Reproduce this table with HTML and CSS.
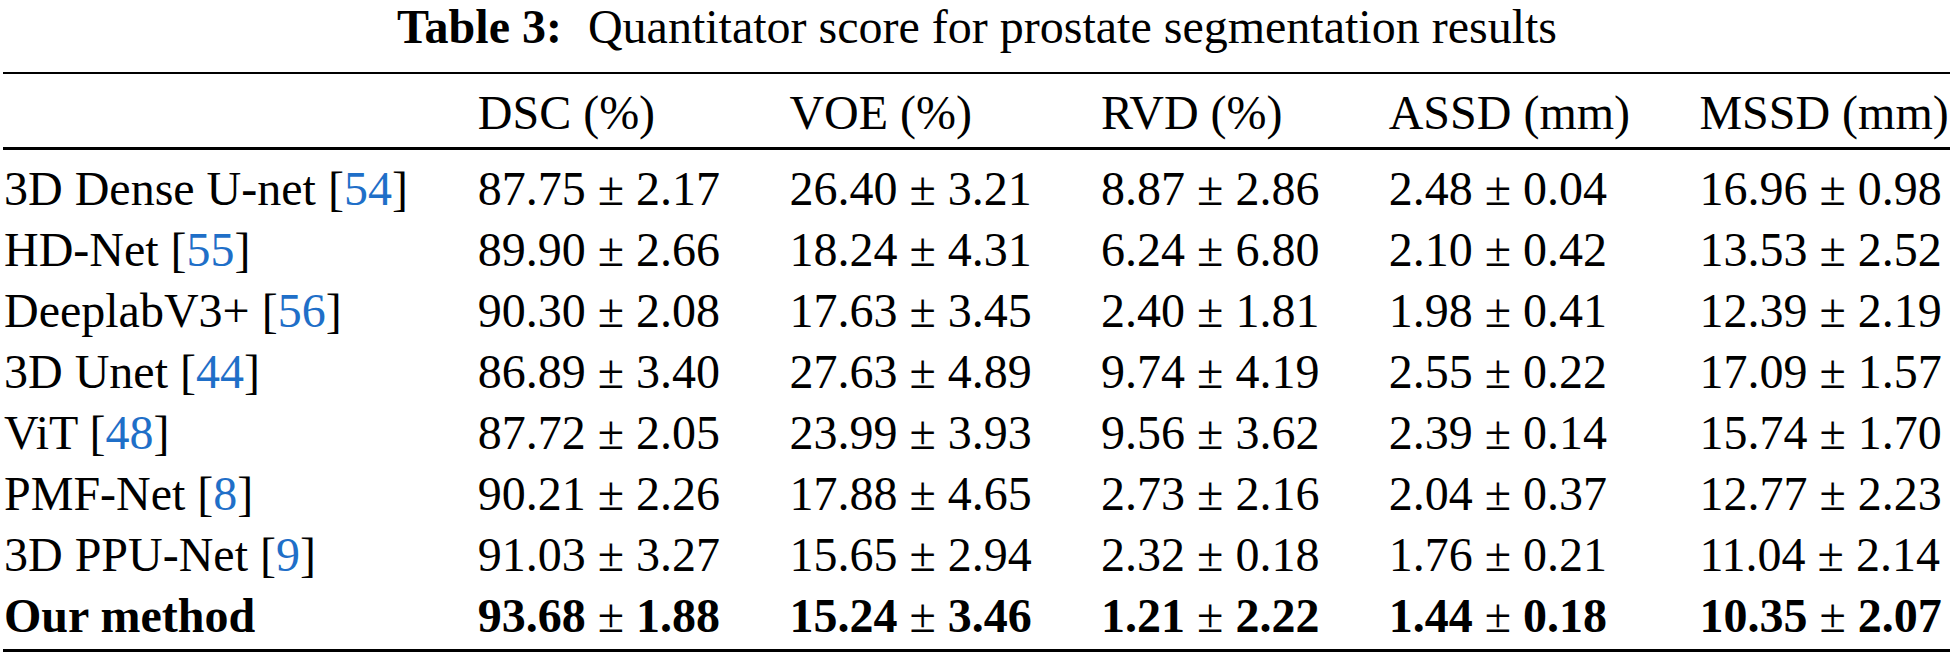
FILE: index.html
```html
<!DOCTYPE html>
<html lang="en">
<head>
<meta charset="utf-8">
<title>Table 3</title>
<link rel="stylesheet" href="styles.css">
</head>
<body>
<div class="page">
  <div class="caption"><span class="cap-label">Table 3:</span><span class="cap-text">Quantitator score for prostate segmentation results</span></div>
  <table class="results">
    <thead>
      <tr>
        <th></th>
        <th>DSC (%)</th>
        <th>VOE (%)</th>
        <th>RVD (%)</th>
        <th>ASSD (mm)</th>
        <th>MSSD (mm)</th>
      </tr>
    </thead>
    <tbody>
      <tr>
        <td>3D Dense U-net [<a class="ref">54</a>]</td>
        <td>87.75 ± 2.17</td><td>26.40 ± 3.21</td><td>8.87 ± 2.86</td><td>2.48 ± 0.04</td><td>16.96 ± 0.98</td>
      </tr>
      <tr>
        <td>HD-Net [<a class="ref">55</a>]</td>
        <td>89.90 ± 2.66</td><td>18.24 ± 4.31</td><td>6.24 ± 6.80</td><td>2.10 ± 0.42</td><td>13.53 ± 2.52</td>
      </tr>
      <tr>
        <td>DeeplabV3+ [<a class="ref">56</a>]</td>
        <td>90.30 ± 2.08</td><td>17.63 ± 3.45</td><td>2.40 ± 1.81</td><td>1.98 ± 0.41</td><td>12.39 ± 2.19</td>
      </tr>
      <tr>
        <td>3D Unet [<a class="ref">44</a>]</td>
        <td>86.89 ± 3.40</td><td>27.63 ± 4.89</td><td>9.74 ± 4.19</td><td>2.55 ± 0.22</td><td>17.09 ± 1.57</td>
      </tr>
      <tr>
        <td>ViT [<a class="ref">48</a>]</td>
        <td>87.72 ± 2.05</td><td>23.99 ± 3.93</td><td>9.56 ± 3.62</td><td>2.39 ± 0.14</td><td>15.74 ± 1.70</td>
      </tr>
      <tr>
        <td>PMF-Net [<a class="ref">8</a>]</td>
        <td>90.21 ± 2.26</td><td>17.88 ± 4.65</td><td>2.73 ± 2.16</td><td>2.04 ± 0.37</td><td>12.77 ± 2.23</td>
      </tr>
      <tr>
        <td>3D PPU-Net [<a class="ref">9</a>]</td>
        <td>91.03 ± 3.27</td><td>15.65 ± 2.94</td><td>2.32 ± 0.18</td><td>1.76 ± 0.21</td><td>11.04 ± 2.14</td>
      </tr>
      <tr class="best">
        <td>Our method</td>
        <td>93.68 <span class="pm">±</span> 1.88</td><td>15.24 <span class="pm">±</span> 3.46</td><td>1.21 <span class="pm">±</span> 2.22</td><td>1.44 <span class="pm">±</span> 0.18</td><td>10.35 <span class="pm">±</span> 2.07</td>
      </tr>
    </tbody>
  </table>
</div>
</body>
</html>
```
FILE: styles.css
```css
html, body {
  margin: 0;
  padding: 0;
  background: #ffffff;
}

body {
  font-family: "Liberation Serif", "Times New Roman", serif;
  font-size: 48px;
  color: #000000;
}

.page {
  width: 1954px;
  display: flex;
  flex-direction: column;
  align-items: stretch;
}

.caption {
  text-align: center;
  line-height: 54px;
  height: 54px;
  margin-bottom: 18px;
  white-space: nowrap;
}

.cap-label {
  font-weight: bold;
  margin-right: 26px;
}

.results {
  border-collapse: collapse;
  margin: 0 4px 0 3px;
  border-top: 2px solid #000;
  border-bottom: 3px solid #000;
}

.results th,
.results td {
  text-align: left;
  font-weight: normal;
  white-space: nowrap;
  padding: 0 34px;
  line-height: 61px;
}

.results th:first-child,
.results td:first-child {
  padding-left: 1px;
}

.results th:last-child,
.results td:last-child {
  padding-right: 0;
}

.results thead th {
  padding-top: 8px;
  padding-bottom: 4px;
  border-bottom: 3px solid #000;
}

.results tbody tr:first-child td {
  padding-top: 8px;
}

.results tbody tr:last-child td {
  padding-bottom: 3px;
}

.ref {
  color: #1f6fc8;
  text-decoration: none;
}

.best td {
  font-weight: bold;
}

.best .pm {
  font-weight: normal;
}
```
